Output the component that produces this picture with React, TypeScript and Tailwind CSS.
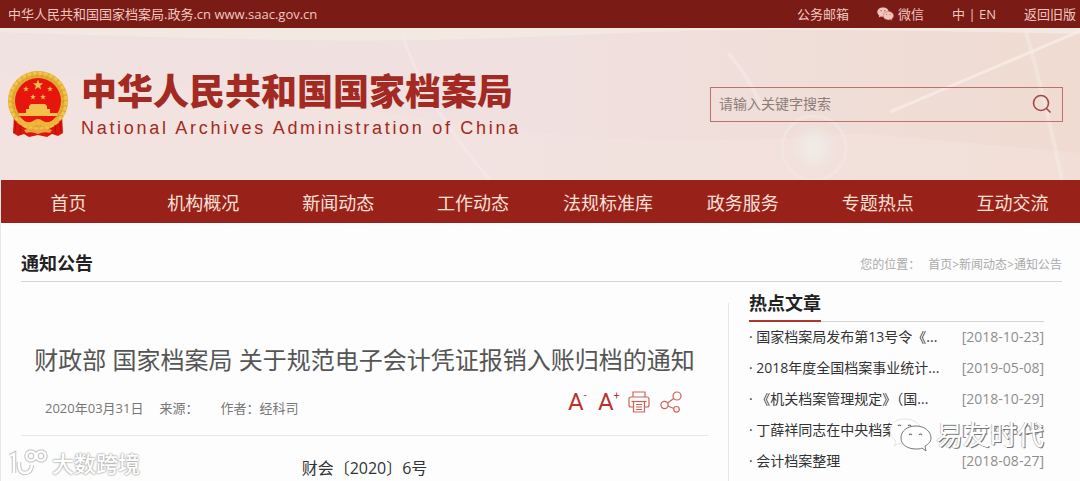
import { clsx } from "clsx";

interface NavItem {
  label: string;
  href: string;
}

interface HotArticle {
  title: string;
  date: string;
}

const navItems: NavItem[] = [
  { label: "首页", href: "#home" },
  { label: "机构概况", href: "#about" },
  { label: "新闻动态", href: "#news" },
  { label: "工作动态", href: "#work" },
  { label: "法规标准库", href: "#laws" },
  { label: "政务服务", href: "#services" },
  { label: "专题热点", href: "#topics" },
  { label: "互动交流", href: "#contact" },
];

const hotArticles: HotArticle[] = [
  { title: "国家档案局发布第13号令《...", date: "2018-10-23" },
  { title: "2018年度全国档案事业统计...", date: "2019-05-08" },
  { title: "《机关档案管理规定》（国...", date: "2018-10-29" },
  { title: "丁薛祥同志在中央档案馆...", date: "2018-08-03" },
  { title: "会计档案整理", date: "2018-08-27" },
];

const STAR = "M0 -1 L0.24 -0.32 L0.95 -0.31 L0.38 0.12 L0.59 0.81 L0 0.4 L-0.59 0.81 L-0.38 0.12 L-0.95 -0.31 L-0.24 -0.32 Z";

function Emblem() {
  return (
    <svg viewBox="0 0 62 66" className="h-[66px] w-[62px] shrink-0" aria-hidden="true">
      <path d="M7 44 L6 62 L11 65 L17 63 L22 66 L31 64 L40 66 L45 63 L51 65 L56 62 L55 44 Z" fill="#dc160c" />
      <circle cx="31" cy="30" r="30" fill="#e3ab32" />
      <circle cx="31" cy="30" r="28" fill="none" stroke="#efc54c" strokeWidth="3" strokeDasharray="4 1.5" />
      <circle cx="31" cy="30" r="25" fill="none" stroke="#d2962a" strokeWidth="1" strokeDasharray="2 3" />
      <circle cx="31" cy="30" r="23" fill="#e6150d" />
      <g fill="#f5c04a">
        <path d={STAR} transform="translate(31 14) scale(5.5)" />
        <path d={STAR} transform="translate(19 18) scale(3)" />
        <path d={STAR} transform="translate(43 18) scale(3)" />
        <path d={STAR} transform="translate(26 26) scale(3)" />
        <path d={STAR} transform="translate(36 26) scale(3)" />
        <path d="M22 35 L24 33 H38 L40 35 V38 H43 V42 H50 V45 H12 V42 H19 V38 H22 Z" />
      </g>
      <path d="M12 45 H50 L44 51 L31 54 L18 51 Z" fill="#e6150d" />
      <path d="M13 46 Q20 54 26 50 Q31 46 36 50 Q42 54 49 46 L52 50 Q42 58 35 55 Q31 53 27 55 Q20 58 10 50 Z" fill="#efb43a" />
      <path d="M17 59 Q24 56 31 59 Q38 56 45 59 L43 62 Q37 60 31 63 Q25 60 19 62 Z" fill="#efa040" />
      <path d="M9 50 L8 61 M14 54 L13 63 M53 50 L54 61 M48 54 L49 63" stroke="#b90d08" strokeWidth="1" fill="none" />
    </svg>
  );
}

function WeChatIcon({ className }: { className?: string }) {
  return (
    <svg viewBox="0 0 17 14" className={className} aria-hidden="true">
      <path d="M6 0.5 C2.7 0.5 0.3 2.5 0.3 5.1 C0.3 6.6 1.1 7.8 2.3 8.7 L1.7 10.5 L3.9 9.4 C4.6 9.6 5.3 9.7 6 9.7 C9.3 9.7 11.8 7.7 11.8 5.1 C11.8 2.5 9.3 0.5 6 0.5 Z" fill="#f3c4bd" />
      <path d="M11.4 4.5 C8.5 4.5 6.2 6.3 6.2 8.7 C6.2 11 8.5 12.9 11.4 12.9 C12 12.9 12.6 12.8 13.2 12.6 L15 13.6 L14.5 12 C15.8 11.2 16.6 10.1 16.6 8.7 C16.6 6.3 14.3 4.5 11.4 4.5 Z" fill="#f3c4bd" stroke="#a8605a" strokeWidth="0.5" />
      <g fill="#a8605a">
        <circle cx="4.1" cy="3.7" r="0.7" />
        <circle cx="7.8" cy="3.7" r="0.7" />
        <circle cx="9.7" cy="7.5" r="0.6" />
        <circle cx="13.1" cy="7.5" r="0.6" />
      </g>
    </svg>
  );
}

function TopBar() {
  return (
    <div className="flex h-7 items-center justify-between bg-[#7a1b16] pr-1 pl-2 text-[13px] leading-5 text-[#f0c8c0]">
      <span>中华人民共和国国家档案局.政务.cn www.saac.gov.cn</span>
      <div className="flex items-center gap-7">
        <a href="#mail">公务邮箱</a>
        <a href="#wechat" className="flex items-center gap-1">
          <WeChatIcon className="h-[14px] w-[17px]" />
          微信
        </a>
        <span>
          <a href="#zh">中</a> | <a href="#en">EN</a>
        </span>
        <a href="#old">返回旧版</a>
      </div>
    </div>
  );
}

function HeaderBackdrop() {
  return (
    <svg viewBox="0 0 1080 152" preserveAspectRatio="none" className="absolute inset-0 h-full w-full" aria-hidden="true">
      <defs>
        <radialGradient id="glow">
          <stop offset="0" stopColor="#f0ebe6" />
          <stop offset="0.55" stopColor="#f0e8e3" stopOpacity="0.9" />
          <stop offset="1" stopColor="#f0e5e0" stopOpacity="0" />
        </radialGradient>
      </defs>
      <path d="M0 0 H1080 V6 Q760 -2 600 6 T300 12 T0 4 Z" fill="#f3e9e3" />
      <path d="M0 45 Q200 55 420 90 T860 105 L1080 125 V152 H0 Z" fill="#f4e6e2" opacity="0.4" />
      <path d="M402 4 Q420 70 490 152" stroke="#f6ecea" strokeWidth="3" fill="none" opacity="0.5" />
      <path d="M728 25 Q750 50 762 80" stroke="#f6ecea" strokeWidth="4" fill="none" opacity="0.5" />
      <path d="M890 84 L1080 3" stroke="#f7ece6" strokeWidth="3" fill="none" opacity="0.8" />
      <path d="M1025 0 Q1045 70 1062 152" stroke="#f6ece6" strokeWidth="4" fill="none" opacity="0.5" />
      <circle cx="814" cy="120" r="32" fill="none" stroke="#f3e9e6" strokeWidth="3" opacity="0.5" />
      <circle cx="814" cy="120" r="24" fill="url(#glow)" />
    </svg>
  );
}

function Header() {
  return (
    <header className="relative bg-gradient-to-r from-[#f0e2e1] via-[#f0e0df] to-[#efdbd1]">
      <HeaderBackdrop />
      <div className="relative flex h-[152px] items-center justify-between pr-[17px] pl-[7px]">
        <div className="flex items-center gap-3">
          <Emblem />
          <div className="pt-1 text-[#a32a22]">
            <h1 className="text-4xl leading-10 font-black">中华人民共和国国家档案局</h1>
            <p className="mt-1 font-[Liberation_Sans] text-lg leading-6 font-medium tracking-[0.15em]">
              National Archives Administration of China
            </p>
          </div>
        </div>
        <form className="flex h-[35px] w-[353px] items-center border border-[#c0706c] pr-[10px] pl-2">
          <input
            type="text"
            aria-label="站内搜索"
            placeholder="请输入关键字搜索"
            className="min-w-0 flex-1 bg-transparent text-sm leading-5 outline-none placeholder:text-[#8f7c7a]"
          />
          <button type="button" aria-label="搜索">
            <svg viewBox="0 0 20 20" className="h-5 w-5" fill="none" stroke="#a04a44" strokeWidth="1.6">
              <circle cx="9" cy="9" r="7.5" />
              <path d="M14.5 14.5 L18.5 18.5" />
            </svg>
          </button>
        </form>
      </div>
    </header>
  );
}

function MainNav() {
  return (
    <nav className="flex h-[43px] bg-[#982219]">
      {navItems.map((item) => (
        <a
          key={item.label}
          href={item.href}
          className="flex flex-1 items-center justify-center pt-[3px] text-lg leading-6 text-[#fbe0d8]"
        >
          {item.label}
        </a>
      ))}
    </nav>
  );
}

function PrintIcon() {
  return (
    <svg viewBox="0 0 22 22" className="h-[22px] w-[22px]" fill="none" stroke="#cf6258" strokeWidth="1.2">
      <path d="M5 6 V1 H17 V6" />
      <path d="M5 16 H3 Q1 16 1 14 V8 Q1 6 3 6 H19 Q21 6 21 8 V14 Q21 16 19 16 H17" />
      <path d="M3.5 10.5 H18.5" />
      <path d="M5.5 10.5 H16.5 V21 H5.5 Z" />
      <path d="M8 13.5 H14 M8 16 H14 M8 18.5 H14" />
    </svg>
  );
}

function ShareIcon() {
  return (
    <svg viewBox="0 0 22 22" className="h-[22px] w-[22px]" fill="none" stroke="#cf6258" strokeWidth="1.2">
      <circle cx="4.5" cy="14" r="3.6" />
      <circle cx="17" cy="5" r="4" />
      <circle cx="16.5" cy="18.3" r="2.8" />
      <path d="M7.5 12 L13.7 7.4 M8 15 L13.8 17.5" />
    </svg>
  );
}

function FontSizeButton({ sign, label }: { sign: string; label: string }) {
  return (
    <button type="button" aria-label={label} className="flex h-6 w-5 items-start font-[Roboto] text-[#b8332a]">
      <span className="text-2xl leading-6">A</span>
      <span className="text-[10px] leading-3">{sign}</span>
    </button>
  );
}

function Article() {
  return (
    <article className="flex-1">
      <h2 className="pt-[39px] text-center text-2xl leading-9 text-[#555]">
        财政部 国家档案局 关于规范电子会计凭证报销入账归档的通知
      </h2>
      <div className="mt-2 flex h-[50px] items-start justify-between border-b border-[#e6e6e6] pt-1 pr-[26px] pl-6 text-[13px] leading-5 text-[#777]">
        <div className="flex gap-4 pt-2">
          <span>2020年03月31日</span>
          <span className="w-[45px]">来源：</span>
          <span>作者：经科司</span>
        </div>
        <div className="flex items-center gap-[10px]">
          <FontSizeButton sign="-" label="缩小字体" />
          <FontSizeButton sign="+" label="放大字体" />
          <button type="button" aria-label="打印">
            <PrintIcon />
          </button>
          <button type="button" aria-label="分享">
            <ShareIcon />
          </button>
        </div>
      </div>
      <p className="pt-5 text-center text-base leading-6 text-[#333]">财会〔2020〕6号</p>
    </article>
  );
}

function HotArticles() {
  return (
    <aside className="w-[334px] shrink-0 border-l border-[#e6e6e6] pr-[18px] pl-5">
      <div className="-mt-3 border-b border-[#d5d5d5]">
        <h3 className="-mb-px inline-block border-b-2 border-[#b0352d] pb-[5px] text-lg leading-6 font-bold text-[#222]">
          热点文章
        </h3>
      </div>
      <ul>
        {hotArticles.map((article, i) => (
          <li
            key={article.title}
            className={clsx("flex justify-between pb-[5px] text-sm leading-5 text-[#333]", i === 0 ? "pt-[5px]" : "pt-[6px]")}
          >
            <a href="#article">· {article.title}</a>
            <time className="text-[#8e8e8e]">[{article.date}]</time>
          </li>
        ))}
      </ul>
    </aside>
  );
}

function AccountMark() {
  return (
    <div className="absolute right-9 bottom-7 flex items-center gap-1">
      <svg viewBox="0 0 44 36" className="h-9 w-11" aria-hidden="true">
        <path d="M17 2 C8 2 2 7 2 14 C2 18 4 21 8 24 L6 29 L12 26 C14 27 16 27 18 27 C27 27 33 21 33 14 C33 7 26 2 17 2 Z" fill="#fff" stroke="#ddd" strokeWidth="0.8" />
        <path d="M28 9 C19 9 13 14 13 21 C13 28 20 32 28 32 C30 32 32 32 34 31 L38 34 L37 29 C41 27 43 24 43 21 C43 14 36 9 28 9 Z" fill="#fff" stroke="#777" strokeWidth="1" />
        <path d="M10 9 q1.5 -2 3 0 M20 9 q1.5 -2 3 0 M21 18 q1.5 -2 3 0 M31 18 q1.5 -2 3 0" stroke="#666" strokeWidth="1.2" fill="none" />
      </svg>
      <span className="text-[27px] leading-9 text-white [text-shadow:1px_1px_0_#777,-1px_0_0_#ccc]">易友时代</span>
    </div>
  );
}

function SiteMark() {
  return (
    <div className="absolute bottom-1 left-2 flex items-center gap-1">
      <svg viewBox="0 0 40 28" className="h-7 w-10" fill="none" aria-hidden="true">
        <g stroke="#c4c4c4" strokeWidth="4.5">
          <path d="M2 7 L6 5 V24 M11 13 Q10 24 17 24 Q23 24 24 16" />
          <circle cx="23" cy="7" r="4.5" />
          <circle cx="33" cy="7" r="4.5" />
        </g>
        <g stroke="#fff" strokeWidth="2.5">
          <path d="M2 7 L6 5 V24 M11 13 Q10 24 17 24 Q23 24 24 16" />
          <circle cx="23" cy="7" r="4.5" />
          <circle cx="33" cy="7" r="4.5" />
        </g>
      </svg>
      <span className="text-[22px] leading-7 font-medium text-white [text-shadow:0_0_2px_#999,0_0_2px_#aaa]">大数跨境</span>
    </div>
  );
}

export default function App() {
  return (
    <div className="relative flex min-h-screen flex-col bg-[#fdfdfd] font-['Open_Sans','Noto_Sans_CJK_SC',sans-serif]">
      <TopBar />
      <Header />
      <div className="flex flex-1 flex-col border-l border-[#e8e8e8]">
        <MainNav />
        <main className="flex flex-1 flex-col pr-[18px] pl-5">
          <div className="flex items-end justify-between border-b border-[#d5d5d5] pt-7 pb-[6px]">
            <h2 className="text-lg leading-6 font-bold text-[#222]">通知公告</h2>
            <div className="flex gap-2 text-xs leading-5 text-[#aaa]">
              <span>您的位置：</span>
              <span>
                <a href="#home">首页</a>&gt;<a href="#news">新闻动态</a>&gt;<a href="#notice">通知公告</a>
              </span>
            </div>
          </div>
          <div className="flex flex-1 gap-5 pt-[21px]">
            <Article />
            <HotArticles />
          </div>
        </main>
      </div>
      <AccountMark />
      <SiteMark />
    </div>
  );
}
